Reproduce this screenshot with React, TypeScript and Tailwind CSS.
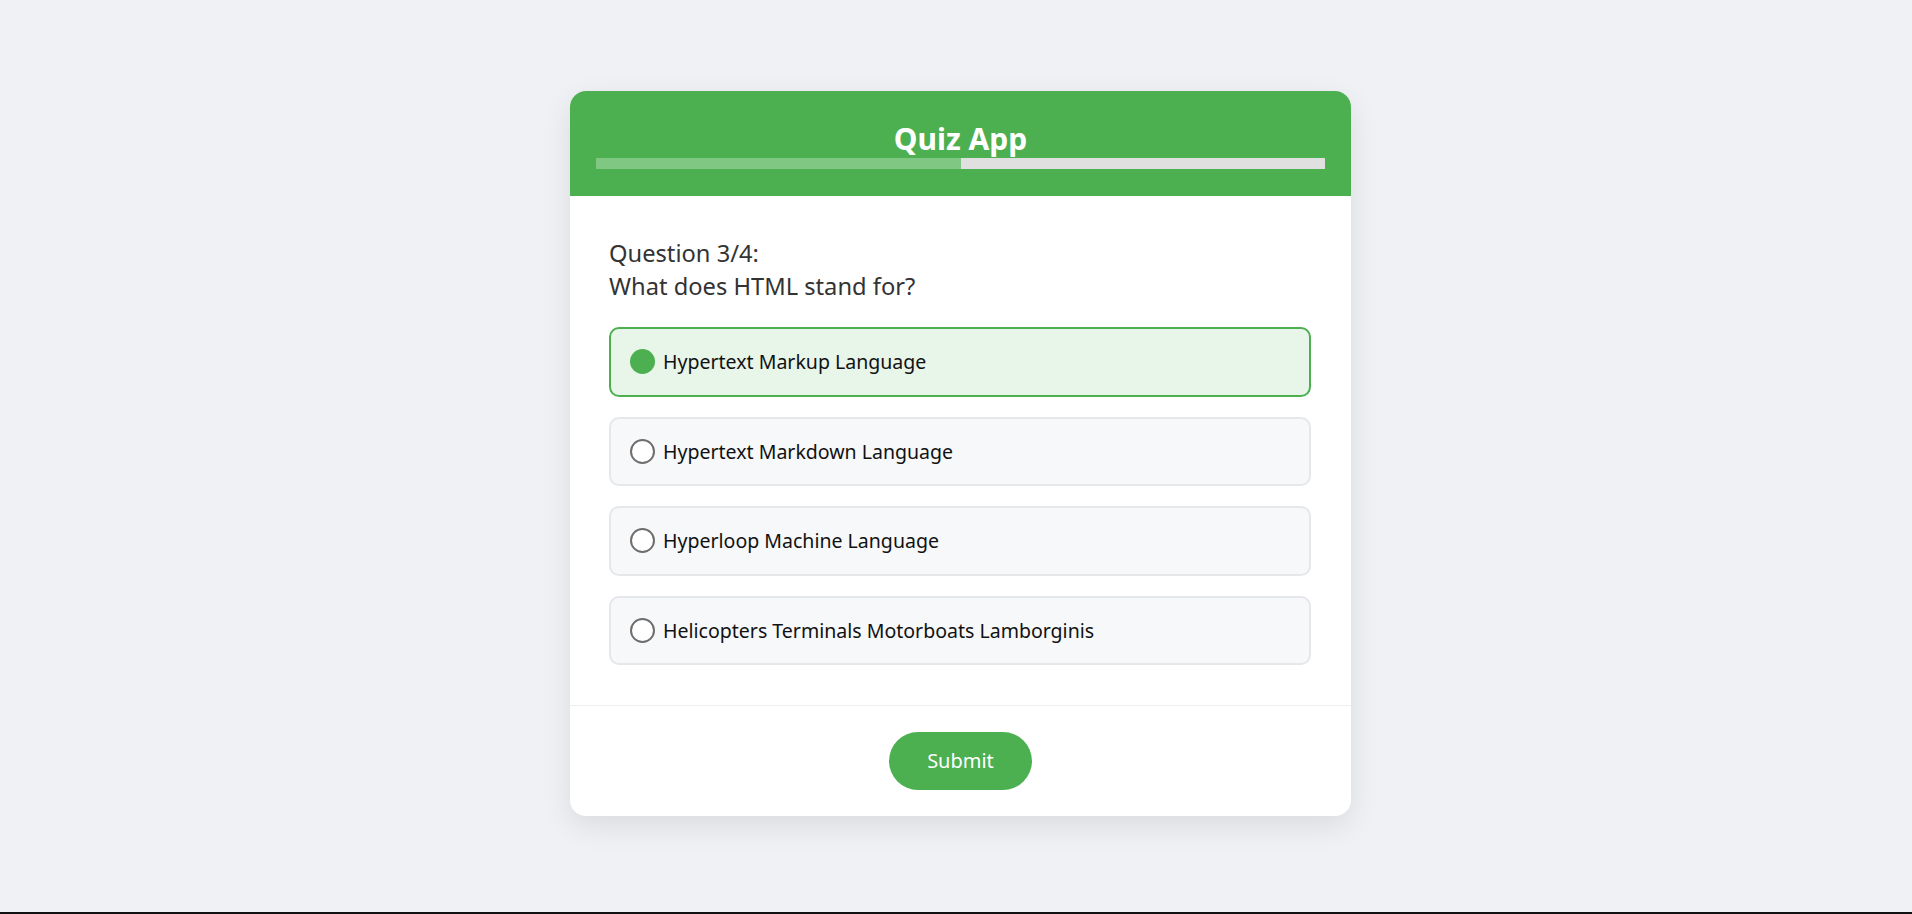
import React, { useState } from "react";

const options = [
  "Hypertext Markup Language",
  "Hypertext Markdown Language",
  "Hyperloop Machine Language",
  "Helicopters Terminals Motorboats Lamborginis",
];

export default function App() {
  const [selected, setSelected] = useState(0);
  return (
    <div
      className="h-screen flex flex-col bg-[#f0f1f5]"
      style={{ fontFamily: '"Noto Sans", "Open Sans", sans-serif' }}
    >
      <div className="flex-1 flex justify-center pt-[91px] pl-[9px]">
        <div className="w-[781px] h-fit bg-white rounded-[16px] overflow-hidden shadow-[0_10px_30px_rgba(0,0,0,0.09)]">
          <div className="bg-[#4caf50] px-[26px] pt-[29px] pb-[27px]">
            <h1 className="text-center text-white font-bold text-[30px] leading-[38px]">
              Quiz App
            </h1>
            <div className="flex h-[11px]">
              <div className="w-1/2 bg-[#81c784]" />
              <div className="w-1/2 bg-[#e0e0e0]" />
            </div>
          </div>
          <div className="pt-[41px] pb-[40px] pl-[39px] pr-[40px]">
            <div className="text-[#333333] text-[23.7px] leading-[33px]">
              <div>Question 3/4:</div>
              <div>What does HTML stand for?</div>
            </div>
            <div className="mt-[24px] flex flex-col gap-[20px]">
              {options.map((o, i) => {
                const active = i === selected;
                return (
                  <button
                    key={o}
                    onClick={() => setSelected(i)}
                    className={
                      active
                        ? "h-[69.5px] flex items-center gap-[8px] pl-[19px] rounded-[10px] border-2 border-[#4caf50] bg-[#e8f5e9] text-left"
                        : "h-[69.5px] flex items-center gap-[8px] pl-[19px] rounded-[10px] border-2 border-[#e6e7eb] bg-[#f7f8fa] text-left"
                    }
                  >
                    {active ? (
                      <span className="w-[25px] h-[25px] rounded-full bg-[#4caf50] shrink-0" />
                    ) : (
                      <span className="w-[25px] h-[25px] rounded-full border-2 border-[#6e6e6e] bg-white shrink-0" />
                    )}
                    <span className="text-[19.55px] text-[#111111]">{o}</span>
                  </button>
                );
              })}
            </div>
          </div>
          <div className="border-t border-[#eeeeee] flex justify-center pt-[26px] pb-[26px]">
            <button className="w-[143px] h-[58px] rounded-full bg-[#4caf50] text-white text-[20px]">
              Submit
            </button>
          </div>
        </div>
      </div>
      <div className="h-[2px] bg-[#111111]" />
    </div>
  );
}
